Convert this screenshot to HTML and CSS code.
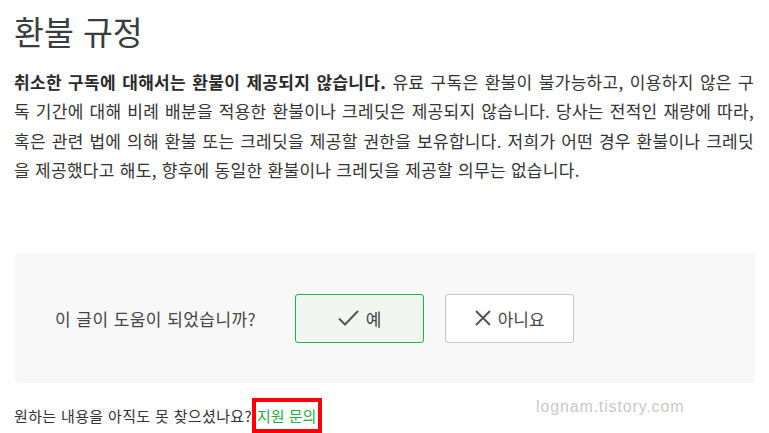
FILE: index.html
```html
<!DOCTYPE html>
<html lang="ko">
<head>
<meta charset="utf-8">
<title>환불 규정</title>
<link rel="stylesheet" href="styles.css">
</head>
<body>
<main class="page">
  <h1 class="title">환불 규정</h1>
  <p class="policy">
    <span class="line"><strong>취소한 구독에 대해서는 환불이 제공되지 않습니다.</strong> 유료 구독은 환불이 불가능하고, 이용하지 않은 구</span>
    <span class="line">독 기간에 대해 비례 배분을 적용한 환불이나 크레딧은 제공되지 않습니다. 당사는 전적인 재량에 따라,</span>
    <span class="line">혹은 관련 법에 의해 환불 또는 크레딧을 제공할 권한을 보유합니다. 저희가 어떤 경우 환불이나 크레딧</span>
    <span class="line line-last">을 제공했다고 해도, 향후에 동일한 환불이나 크레딧을 제공할 의무는 없습니다.</span>
  </p>

  <section class="feedback">
    <span class="feedback-q">이 글이 도움이 되었습니까?</span>
    <button class="btn btn-yes" type="button">
      <svg class="icon" width="21" height="16" viewBox="0 0 21 16" aria-hidden="true"><path d="M1 8.5 L7 14.5 L20 1" fill="none" stroke="#555" stroke-width="2"/></svg>
      <span>예</span>
    </button>
    <button class="btn btn-no" type="button">
      <svg class="icon" width="16" height="16" viewBox="0 0 16 16" aria-hidden="true"><path d="M1 1 L15 15 M15 1 L1 15" fill="none" stroke="#555" stroke-width="2"/></svg>
      <span>아니요</span>
    </button>
  </section>

  <footer class="more">
    <span class="more-q">원하는 내용을 아직도 못 찾으셨나요?</span><a class="support" href="#">지원 문의</a>
    <span class="watermark">lognam.tistory.com</span>
  </footer>
</main>
</body>
</html>
```

FILE: styles.css
```css
html, body {
  margin: 0;
  padding: 0;
  background: #ffffff;
}

body {
  font-family: "Noto Sans CJK KR", "Noto Sans", sans-serif;
  color: #333333;
}

.page {
  width: 740px;
  padding: 0 15px 0 14px;
  position: relative;
}

.title {
  margin: 11px 0 0 0;
  font-size: 32.5px;
  line-height: 40px;
  font-weight: 400;
  color: #3a3d3f;
}

.policy {
  margin: 16px 0 0 0;
  font-size: 17px;
  line-height: 29.3px;
  letter-spacing: 0.3px;
  color: #333333;
}

.line {
  display: block;
  white-space: nowrap;
  text-align: justify;
  text-align-last: justify;
}

.line-last {
  text-align: left;
  text-align-last: left;
}

.policy strong {
  font-weight: 700;
  color: #2a2a2a;
}

.feedback {
  margin: 69px -1px 0 1px;
  height: 130px;
  background: #f8f8f8;
  border-radius: 4px;
  display: flex;
  align-items: center;
  padding-left: 40px;
  box-sizing: border-box;
}

.feedback-q {
  font-size: 17px;
  letter-spacing: 0.45px;
  color: #444444;
  margin-right: 39px;
}

.btn {
  width: 129px;
  height: 49px;
  box-sizing: border-box;
  border-radius: 3px;
  display: flex;
  align-items: center;
  justify-content: center;
  gap: 7px;
  font-family: "Noto Sans CJK KR", "Noto Sans", sans-serif;
  font-size: 17px;
  color: #444444;
  padding: 0;
  cursor: pointer;
}

.btn-yes {
  background: #f1f7f0;
  border: 1px solid #1fb24b;
  margin-right: 21px;
}

.btn-no {
  background: #ffffff;
  border: 1px solid #c6c6c6;
}

.icon {
  display: block;
}

.more {
  margin-top: 14px;
  height: 36px;
  display: flex;
  align-items: center;
  font-size: 15px;
  letter-spacing: 0.35px;
  color: #333333;
}

.support {
  color: #1fae3f;
  letter-spacing: 0;
  text-decoration: none;
  border: 4px solid #ff0000;
  padding: 0 2px 0 1px;
  height: 27px;
  display: flex;
  align-items: center;
}

.watermark {
  position: absolute;
  left: 536px;
  bottom: 17px;
  font-family: "Liberation Sans", Arial, sans-serif;
  font-size: 16px;
  letter-spacing: 0.85px;
  color: #c9c9c9;
}
```
